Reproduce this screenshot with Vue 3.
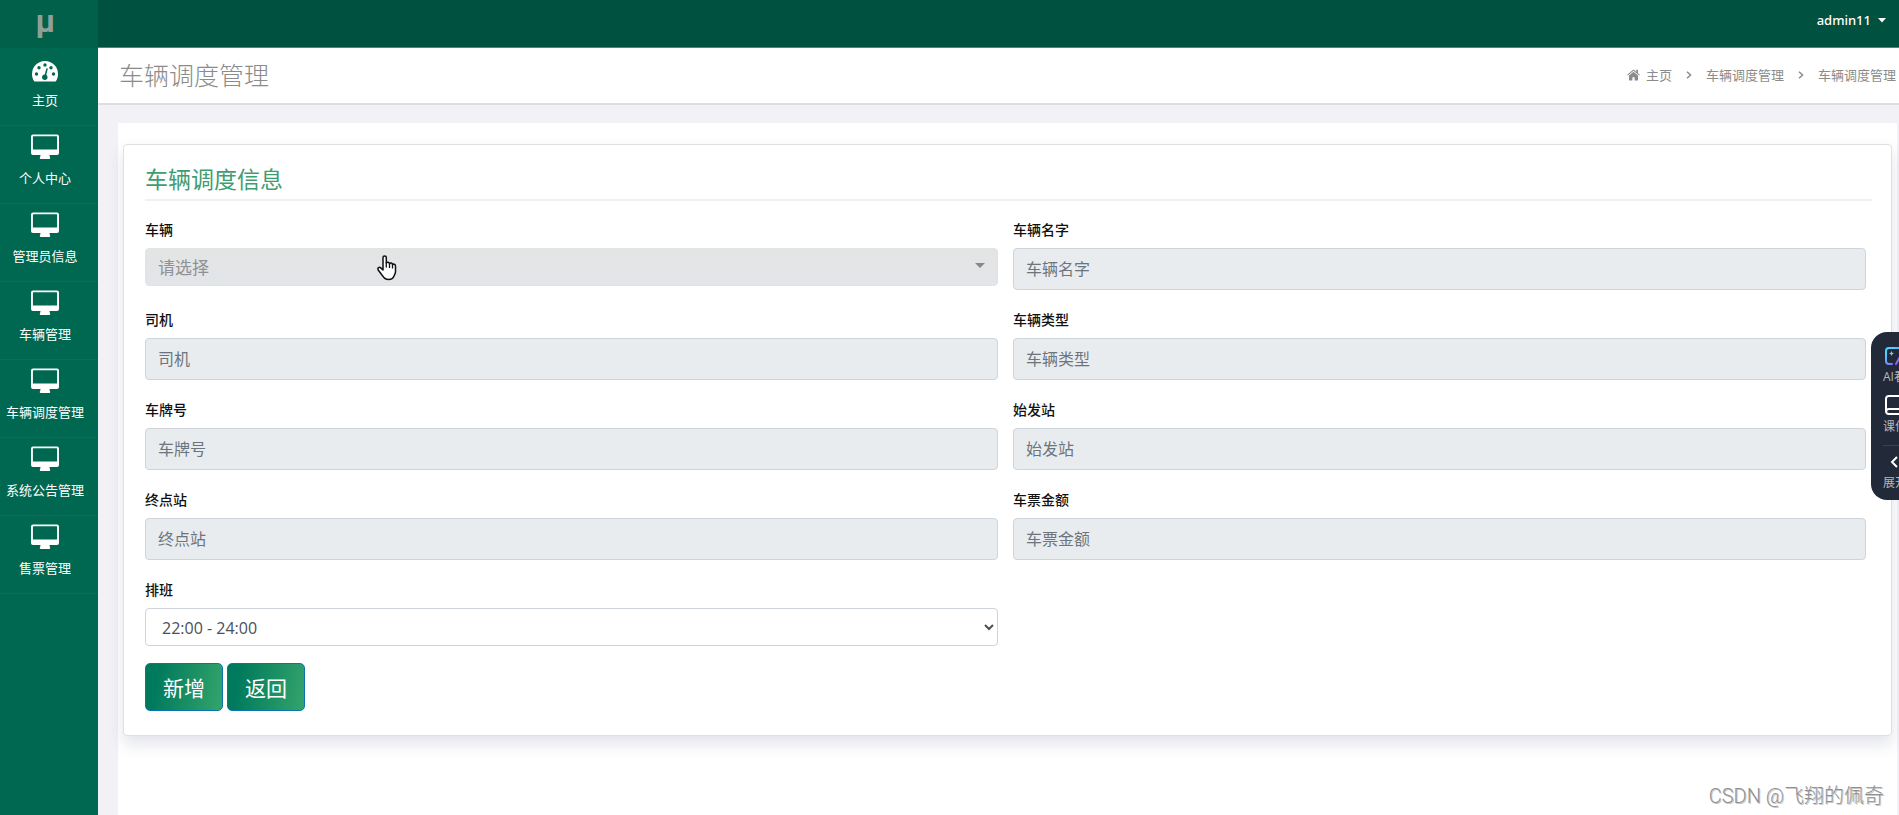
<script setup>
import { ref } from 'vue'

const menu = ['主页', '个人中心', '管理员信息', '车辆管理', '车辆调度管理', '系统公告管理', '售票管理']

const fields = [
  { id: 'name', label: '车辆名字' },
  { id: 'driver', label: '司机' },
  { id: 'type', label: '车辆类型' },
  { id: 'plate', label: '车牌号' },
  { id: 'start', label: '始发站' },
  { id: 'end', label: '终点站' },
  { id: 'price', label: '车票金额' },
]

const vehicle = ref('')
const shift = ref('22:00 - 24:00')
</script>

<template>
  <div class="app">
    <aside class="sidebar">
      <a class="logo" href="#">µ</a>
      <nav>
        <a v-for="(item, i) in menu" :key="item" class="nav-item" href="#">
          <svg v-if="i === 0" class="nav-icon" viewBox="0 0 28 26" aria-hidden="true">
            <path
              fill="#fff"
              d="M14 1A13 13 0 0 0 1 14c0 2.6.7 5 2 7 .3.4.7.6 1.200.6h19.600c.5 0 .9-.2 1.200-.6 1.300-2 2-4.400 2-7A13 13 0 0 0 14 1z"
            />
            <g fill="#006850">
              <circle cx="5.500" cy="14" r="1.700" />
              <circle cx="8" cy="7.800" r="1.700" />
              <circle cx="14" cy="5" r="1.700" />
              <circle cx="20" cy="7.800" r="1.700" />
              <circle cx="22.500" cy="14" r="1.700" />
              <circle cx="13.800" cy="17.200" r="2.700" />
            </g>
            <path d="M14 16.500L16 9" stroke="#006850" stroke-width="1.500" stroke-linecap="round" />
          </svg>
          <svg v-else class="nav-icon monitor" viewBox="0 0 28 26" aria-hidden="true">
            <path
              fill="#fff"
              fill-rule="evenodd"
              d="M2 .5h24a2 2 0 0 1 2 2V19a2 2 0 0 1-2 2h-7.500c0 1.500.7 2.200.7 3.200 0 .6-.3.800-.8.800H9.600c-.5 0-.8-.2-.8-.8 0-1 .7-1.700.7-3.200H2a2 2 0 0 1-2-2V2.500a2 2 0 0 1 2-2zM2.500 2.200a.6.6 0 0 0-.6.6v12.600h24.200V2.800a.6.6 0 0 0-.6-.6z"
            />
          </svg>
          <span>{{ item }}</span>
        </a>
      </nav>
    </aside>

    <div class="main">
      <header class="topbar">
        <button class="user" type="button">
          admin11
          <svg width="8" height="5" viewBox="0 0 8 5" aria-hidden="true"><path fill="#fff" d="M0 0h8L4 4.500z" /></svg>
        </button>
      </header>

      <div class="page-head">
        <h1>车辆调度管理</h1>
        <nav class="crumbs">
          <a href="#">
            <svg width="13" height="12" viewBox="0 0 13 12" aria-hidden="true">
              <path fill="#8b8b8b" d="M6.500 2.800L2 6.600V11c0 .3.200.5.500.5h2.900V8.200h2.200v3.300h2.900c.3 0 .5-.2.500-.5V6.600z" />
              <path fill="#8b8b8b" d="M12.800 5.700L11 4.200V.8H9.300v2L7.300 1.100a1.200 1.200 0 0 0-1.600 0L.2 5.700l.6.8 5.700-4.700 5.700 4.700z" />
            </svg>
            主页
          </a>
          <svg class="sep" width="6" height="8" viewBox="0 0 6 8" aria-hidden="true"><path d="M1 .7L4.600 4 1 7.300" /></svg>
          <a href="#">车辆调度管理</a>
          <svg class="sep" width="6" height="8" viewBox="0 0 6 8" aria-hidden="true"><path d="M1 .7L4.600 4 1 7.300" /></svg>
          <span>车辆调度管理</span>
        </nav>
      </div>

      <main class="content">
        <div class="panel">
          <form class="card" @submit.prevent>
            <h2>车辆调度信息</h2>
            <div class="grid">
              <div class="field">
                <label for="vehicle">车辆</label>
                <div class="picker">
                  <select id="vehicle" v-model="vehicle">
                    <option value="">请选择</option>
                  </select>
                  <svg class="caret" width="10" height="5" viewBox="0 0 10 5" aria-hidden="true"><path fill="#85888b" d="M0 0h10L5 5z" /></svg>
                  <svg class="hand" width="20" height="26" viewBox="0 0 20 26" aria-hidden="true">
                    <path
                      fill="#fff"
                      stroke="#111"
                      stroke-width="1.500"
                      stroke-linejoin="round"
                      d="M6 15V2.500C6 .4 9.300.4 9.300 2.500V8c.8-1.300 3-1 3.200.7.900-1.200 2.900-.8 3 .9 1-.9 3-.5 3 1.500v5.500c0 2-.8 3-1.500 4.400-.7 2-2 3.500-5.300 3.500-3.700 0-5-1.500-6.200-3.800L1.200 15c-1-2 1-3.400 2.500-2.100z"
                    />
                    <path fill="none" stroke="#111" stroke-width="1.300" d="M9.300 7.500v5M12.500 8.500v4.500M15.500 9.500v4" />
                  </svg>
                </div>
              </div>
              <div v-for="f in fields" :key="f.id" class="field">
                <label :for="f.id">{{ f.label }}</label>
                <input :id="f.id" type="text" :placeholder="f.label" readonly />
              </div>
              <div class="field">
                <label for="shift">排班</label>
                <select id="shift" v-model="shift" class="shift">
                  <option>22:00 - 24:00</option>
                </select>
              </div>
            </div>
            <div class="actions">
              <button type="submit">新增</button>
              <button type="button">返回</button>
            </div>
          </form>
        </div>
      </main>
    </div>

    <div class="dock-clip">
      <div class="dock">
        <button type="button">
          <svg width="20" height="18" viewBox="0 0 20 18" fill="none" aria-hidden="true">
            <defs>
              <linearGradient id="ai" x1="0" y1="0" x2="1" y2="1">
                <stop offset="0.2" stop-color="#4fd0ff" />
                <stop offset="0.8" stop-color="#8a5cff" />
              </linearGradient>
            </defs>
            <path stroke="url(#ai)" stroke-width="2" stroke-linecap="round" d="M7 17H4a3 3 0 0 1-3-3V4a3 3 0 0 1 3-3h12a3 3 0 0 1 3 3v5M11 17l5-9 3 9" />
            <path fill="#5fd4ff" d="M6.500 4l.8 1.700 1.700.8-1.700.8L6.500 9l-.8-1.700L4 6.500l1.700-.8z" />
          </svg>
          <span>AI看课</span>
        </button>
        <button type="button">
          <svg width="20" height="20" viewBox="0 0 20 20" fill="none" stroke="#fff" stroke-width="2" aria-hidden="true">
            <path d="M19 1H4a3 3 0 0 0-3 3v12a3 3 0 0 0 3 3h15zM1 17a3 3 0 0 1 3-3h15" />
          </svg>
          <span>课件</span>
        </button>
        <hr />
        <button type="button">
          <svg class="fold" width="8" height="12" viewBox="0 0 8 12" fill="none" stroke="#fff" stroke-width="2" aria-hidden="true">
            <path d="M7 1L2 6l5 5" />
          </svg>
          <span>展开</span>
        </button>
      </div>
    </div>

    <div class="watermark">CSDN @飞翔的佩奇</div>
  </div>
</template>

<style>
body {
  margin: 0;
}
</style>

<style scoped>
.app {
  position: relative;
  display: flex;
  min-height: 100vh;
  overflow: hidden;
  background: #f1f1f6;
  font-family: "Open Sans", "Noto Sans CJK SC", sans-serif;
  font-size: 13px;
}
*,
*::before {
  box-sizing: border-box;
}
a {
  color: inherit;
  text-decoration: none;
}
button,
input,
select {
  font-family: inherit;
}
svg {
  flex: none;
}
.sidebar {
  flex: none;
  width: 98px;
  background: #006850;
  color: #fff;
}
.logo {
  display: block;
  height: 48px;
  padding-right: 7px;
  background: #00604a;
  color: #8f9f99;
  font: bold 32px/42px Roboto, sans-serif;
  text-align: center;
}
.nav-item {
  display: flex;
  flex-direction: column;
  align-items: center;
  height: 78px;
  padding: 12px 8px 0 0;
  border-bottom: 1px solid #086e57;
  line-height: 20px;
  white-space: nowrap;
}
.nav-icon {
  width: 28px;
  height: 26px;
  margin-bottom: 4px;
}
.monitor {
  margin-top: -4px;
  margin-bottom: 8px;
}
.main {
  flex: 1;
  display: flex;
  flex-direction: column;
  min-width: 0;
}
.topbar {
  display: flex;
  justify-content: flex-end;
  height: 48px;
  padding: 0 13px;
  border-bottom: 1px solid #4d8578;
  background: #005140;
}
.user {
  display: flex;
  align-items: center;
  gap: 7px;
  height: 40px;
  padding: 0;
  border: 0;
  background: none;
  color: #fff;
  font-family: "Noto Sans", sans-serif;
  font-size: 13px;
  font-weight: 500;
}
.page-head {
  display: flex;
  align-items: center;
  justify-content: space-between;
  height: 57px;
  padding: 0 3px 2px 21px;
  border-bottom: 2px solid #dddee1;
  background: #fff;
  color: #8b8b8b;
}
h1 {
  margin: 0;
  font-size: 25px;
  font-weight: 300;
  line-height: 36px;
}
.crumbs,
.crumbs a {
  display: flex;
  align-items: center;
}
.crumbs {
  gap: 14px;
}
.crumbs a {
  gap: 6px;
}
.sep {
  fill: none;
  stroke: #8b8b8b;
  stroke-width: 1.5;
}
.content {
  flex: 1;
  display: flex;
  padding: 18px 2px 0 20px;
}
.panel {
  flex: 1;
  padding: 21px 5px 0 5px;
  background: #fff;
}
.card {
  padding: 19px 25px 24px 21px;
  border: 1px solid #dee0e4;
  border-radius: 4px;
  background: #fff;
  box-shadow: 0 8px 16px rgba(60, 70, 130, 0.15);
}
h2 {
  margin: 0 -6px 17px 0;
  padding-bottom: 5px;
  border-bottom: 2px solid #f0f1f2;
  color: #3f9d72;
  font-size: 23px;
  font-weight: 400;
  line-height: 30px;
}
.grid {
  display: grid;
  grid-template-columns: 1fr 1fr;
  gap: 18px 15px;
}
.field {
  display: flex;
  flex-direction: column;
  gap: 6px;
}
label {
  color: #111;
  font-size: 14px;
  font-weight: 500;
  line-height: 24px;
}
input,
select {
  width: 100%;
  border: 1px solid #ced4da;
  border-radius: 4px;
  font-size: 16px;
}
input {
  height: 42px;
  padding: 0 12px;
  background: #e9ecef;
  color: #495057;
  outline: 0;
}
input::placeholder {
  color: #6c757d;
}
.picker {
  position: relative;
}
.picker select {
  display: block;
  height: 38px;
  padding: 0 12px;
  border-color: #e0e2e3;
  appearance: none;
  background: linear-gradient(#e3e4e4, #e2e5e9);
  color: #8e9296;
  font-size: 17px;
}
.caret {
  position: absolute;
  top: 15px;
  right: 13px;
}
.hand {
  position: absolute;
  top: 7px;
  left: 232px;
}
.shift {
  height: 38px;
  padding: 2px 13px 0 12px;
  background: #fff;
  color: #495057;
}
.actions {
  display: flex;
  gap: 4px;
  margin-top: 17px;
}
.actions button {
  height: 48px;
  padding: 0 17px;
  border: 1px solid #0a73b0;
  border-radius: 5px;
  background: linear-gradient(100deg, #007a5c 15%, #34a46c);
  color: #fff;
  font-size: 21px;
}
.dock-clip {
  position: absolute;
  top: 332px;
  right: 0;
  width: 28px;
  overflow: hidden;
}
.dock {
  width: 60px;
  padding: 15px 12px 9px;
  border-radius: 16px;
  background: #222938;
}
.dock button {
  display: flex;
  flex-direction: column;
  align-items: flex-start;
  gap: 4px;
  padding: 0 0 10px 2px;
  border: 0;
  background: none;
  color: #b4b8bf;
  font-size: 12px;
  line-height: 16px;
  white-space: nowrap;
}
.dock span {
  margin-left: -2px;
}
.dock hr {
  margin: 0 0 10px;
  border: 0;
  border-top: 1px solid #3a414f;
}
.dock button:last-child {
  padding-bottom: 0;
  gap: 7px;
}
.fold {
  margin-left: 5px;
}
.watermark {
  position: absolute;
  right: 15px;
  bottom: 4px;
  color: #909090;
  font: 300 20px/30px Roboto, "Noto Sans CJK SC", sans-serif;
  text-shadow: 1px 1px 0 #c8c8c8;
}
</style>
